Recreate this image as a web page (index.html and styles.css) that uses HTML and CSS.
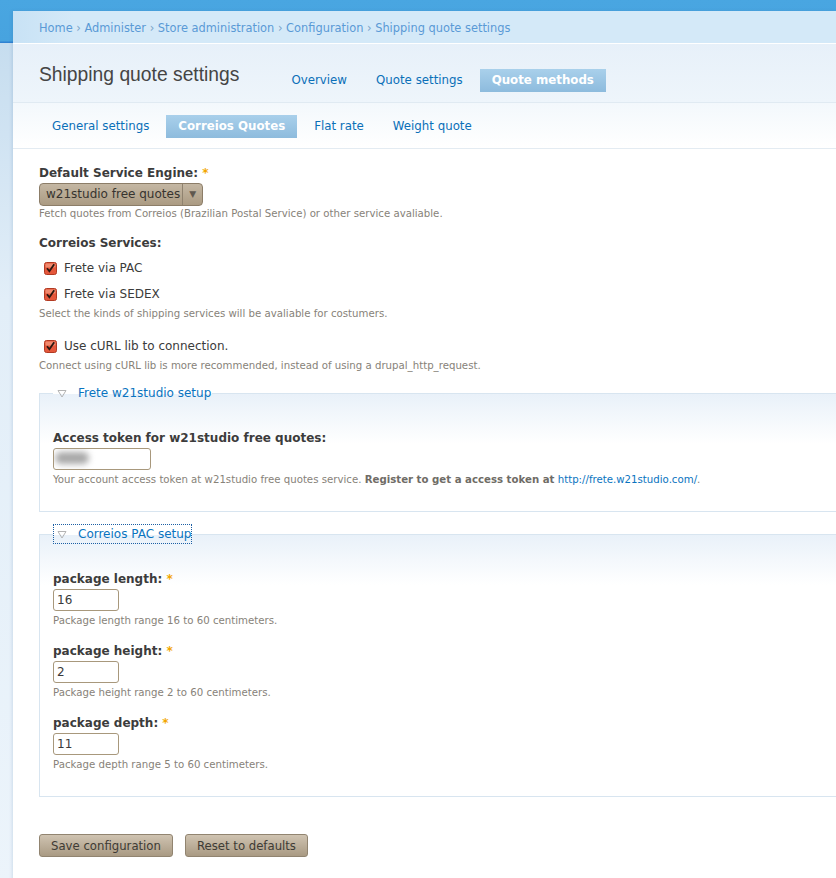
FILE: index.html
```html
<!DOCTYPE html>
<html lang="en">

<head>
    <meta charset="UTF-8">
    <title>Shipping quote settings</title>
    <link rel="stylesheet" href="styles.css">
</head>

<body>
    <div class="page">
        <!-- Breadcrumb -->
        <div class="breadcrumb">
            <a href="#">Home</a> <span class="sep">›</span>
            <a href="#">Administer</a> <span class="sep">›</span>
            <a href="#">Store administration</a> <span class="sep">›</span>
            <a href="#">Configuration</a> <span class="sep">›</span>
            <a href="#">Shipping quote settings</a>
        </div>

        <!-- Title + primary tabs -->
        <div class="header">
            <h1 class="title">Shipping quote settings</h1>
            <ul class="tabs">
                <li><a href="#">Overview</a></li>
                <li><a href="#">Quote settings</a></li>
                <li class="active"><a href="#">Quote methods</a></li>
            </ul>
        </div>

        <!-- Secondary tabs -->
        <div class="subtabs">
            <ul class="tabs">
                <li><a href="#">General settings</a></li>
                <li class="active"><a href="#">Correios Quotes</a></li>
                <li><a href="#">Flat rate</a></li>
                <li><a href="#">Weight quote</a></li>
            </ul>
        </div>

        <form class="content">
            <div class="form-item">
                <label class="label">Default Service Engine: <span class="req">*</span></label>
                <div class="select">
                    <span class="select-value">w21studio free quotes</span>
                    <span class="select-arrow">▼</span>
                </div>
                <div class="description">Fetch quotes from Correios (Brazilian Postal Service) or other service avaliable.</div>
            </div>

            <div class="form-item">
                <label class="label">Correios Services:</label>
                <div class="checkbox">
                    <svg class="check" width="13" height="13" viewBox="0 0 13 13"><rect x="0.5" y="0.5" width="12" height="12" rx="2" fill="#e4573b" stroke="#b23a22"/><rect x="1.5" y="1.5" width="10" height="4" rx="1" fill="#f08a6e"/><path d="M3 6.2 L5.4 9.2 L10.2 2.2" fill="none" stroke="#2b1710" stroke-width="1.8"/></svg>
                    <span>Frete via PAC</span>
                </div>
                <div class="checkbox">
                    <svg class="check" width="13" height="13" viewBox="0 0 13 13"><rect x="0.5" y="0.5" width="12" height="12" rx="2" fill="#e4573b" stroke="#b23a22"/><rect x="1.5" y="1.5" width="10" height="4" rx="1" fill="#f08a6e"/><path d="M3 6.2 L5.4 9.2 L10.2 2.2" fill="none" stroke="#2b1710" stroke-width="1.8"/></svg>
                    <span>Frete via SEDEX</span>
                </div>
                <div class="description">Select the kinds of shipping services will be avaliable for costumers.</div>
            </div>

            <div class="form-item tight">
                <div class="checkbox">
                    <svg class="check" width="13" height="13" viewBox="0 0 13 13"><rect x="0.5" y="0.5" width="12" height="12" rx="2" fill="#e4573b" stroke="#b23a22"/><rect x="1.5" y="1.5" width="10" height="4" rx="1" fill="#f08a6e"/><path d="M3 6.2 L5.4 9.2 L10.2 2.2" fill="none" stroke="#2b1710" stroke-width="1.8"/></svg>
                    <span>Use cURL lib to connection.</span>
                </div>
                <div class="description">Connect using cURL lib is more recommended, instead of using a drupal_http_request.</div>
            </div>

            <fieldset class="group">
                <legend><span class="legend-inner"><svg class="arrow" width="10" height="9" viewBox="0 0 10 9"><polygon points="1,1.5 9,1.5 5,8" fill="none" stroke="#b4b4b4"/></svg><a href="#">Frete w21studio setup</a></span></legend>
                <div class="form-item">
                    <label class="label">Access token for w21studio free quotes:</label>
                    <div class="input wide"><span class="blur"></span></div>
                    <div class="description">Your account access token at w21studio free quotes service. <strong>Register to get a access token at</strong> <a href="#">http://frete.w21studio.com/</a>.</div>
                </div>
            </fieldset>

            <fieldset class="group">
                <legend><span class="legend-inner focused"><svg class="arrow" width="10" height="9" viewBox="0 0 10 9"><polygon points="1,1.5 9,1.5 5,8" fill="none" stroke="#b4b4b4"/></svg><a href="#">Correios PAC setup</a></span></legend>
                <div class="form-item">
                    <label class="label">package length: <span class="req">*</span></label>
                    <input class="input" type="text" value="16">
                    <div class="description">Package length range 16 to 60 centimeters.</div>
                </div>
                <div class="form-item">
                    <label class="label">package height: <span class="req">*</span></label>
                    <input class="input" type="text" value="2">
                    <div class="description">Package height range 2 to 60 centimeters.</div>
                </div>
                <div class="form-item">
                    <label class="label">package depth: <span class="req">*</span></label>
                    <input class="input" type="text" value="11">
                    <div class="description">Package depth range 5 to 60 centimeters.</div>
                </div>
            </fieldset>

            <div class="actions">
                <button type="button" class="btn">Save configuration</button>
                <button type="button" class="btn">Reset to defaults</button>
            </div>
        </form>
    </div>
</body>

</html>
```

FILE: styles.css
```css
body {
    margin: 0;
    font-family: "DejaVu Sans", Verdana, sans-serif;
    font-size: 12px;
    color: #3b3b3b;
    min-height: 100vh;
    background:
        linear-gradient(#49a6e1 0, #47a3df 41px, #2f82d2 42px, #2f82d2 43px, transparent 43px),
        linear-gradient(#c6ddef 43px, #e2eef8 300px, #ecf4fb);
}

a {
    color: #0a74c0;
    text-decoration: none;
}

.page {
    margin: 11px 0 0 13px;
    background: #fff;
    min-height: 867px;
    box-shadow: -1px 0 3px rgba(40, 90, 140, 0.15);
}

.breadcrumb {
    height: 30px;
    line-height: 30px;
    padding: 2px 0 0 26px;
    font-size: 11.4px;
    background: linear-gradient(to right, #c8e2f5, #d4e9f8 60px);
    border-bottom: 1px solid #fff;
}

.breadcrumb a {
    color: #5a9ad6;
}

.breadcrumb .sep {
    color: #7aa4c8;
}

.header {
    display: flex;
    align-items: flex-end;
    height: 59px;
    box-sizing: border-box;
    padding: 0 0 10px 26px;
    background: linear-gradient(#e7f0f9, #eef5fb);
    border-bottom: 1px solid #e0eaf2;
}

.title {
    margin: 0 40px 6px 0;
    font-family: "Liberation Sans", Arial, sans-serif;
    font-size: 19.3px;
    font-weight: normal;
    line-height: 23px;
    color: #454545;
}

.tabs {
    display: flex;
    margin: 0;
    padding: 0;
    list-style: none;
}

.tabs li {
    margin-right: 5px;
}

.tabs a {
    display: block;
    padding: 4px 12px;
    line-height: 15px;
    font-size: 11.8px;
    color: #0a6fb8;
}

.tabs .active a {
    background: linear-gradient(#a9d0eb, #8dbbdd);
    color: #fff;
    font-weight: bold;
}

.subtabs {
    padding: 12px 0 10px 27px;
    background: linear-gradient(#f3f8fc, #fff);
    border-bottom: 1px solid #e3ebf2;
}

.content {
    padding: 17px 0 30px 26px;
}

.form-item {
    margin-bottom: 16px;
}

.form-item.tight {
    margin-bottom: 11px;
}

.label {
    display: block;
    font-weight: bold;
    line-height: 15px;
    margin-bottom: 2px;
    color: #3c3c3c;
}

.req {
    color: #f2a600;
}

.select {
    display: flex;
    align-items: center;
    width: max-content;
    height: 23px;
    box-sizing: border-box;
    border: 1px solid #8c7d68;
    border-radius: 4px;
    background: linear-gradient(#c4b7a3, #ab9b83);
}

.select-value {
    padding: 0 2px 0 6px;
    line-height: 21px;
    color: #37342f;
}

.select-arrow {
    border-left: 1px solid #8f826f;
    padding: 0 6px;
    line-height: 21px;
    font-size: 9px;
    color: #5f584e;
}

.description {
    margin-top: 3px;
    font-size: 10.2px;
    line-height: 13px;
    color: #878279;
}

.select + .description {
    margin-top: 1px;
}

.description strong {
    color: #6f6c66;
}

.checkbox {
    display: flex;
    align-items: center;
    height: 20px;
    margin: 6px 0 0 5px;
}

.label + .checkbox {
    margin-top: 7px;
}

.check {
    margin-right: 7px;
}

.group {
    margin: 0 0 12px 0;
    padding: 28px 13px 25px 13px;
    border: 1px solid #d8e5f0;
    border-right: 0;
    background: linear-gradient(#e9f1f9, #fff 50px);
}

.group legend {
    padding: 0;
}

.legend-inner {
    display: inline-flex;
    align-items: center;
    height: 18px;
    border: 1px solid transparent;
}

.legend-inner.focused {
    border: 1px dotted #1c5fa4;
}

.arrow {
    margin: 0 11px 0 3px;
}

.input {
    display: block;
    width: 66px;
    height: 22px;
    box-sizing: border-box;
    padding: 0 3px;
    border: 1px solid #a8987c;
    border-radius: 3px;
    font-family: "DejaVu Sans", Verdana, sans-serif;
    font-size: 12px;
    color: #3a3a3a;
    background: #fff;
}

.input.wide {
    width: 98px;
    position: relative;
    overflow: hidden;
}

.blur {
    position: absolute;
    left: 1px;
    top: 3px;
    width: 34px;
    height: 12px;
    border-radius: 6px;
    background: #a8a8a8;
    filter: blur(3px);
}

.group .form-item {
    margin-bottom: 17px;
}

.group .form-item:last-child {
    margin-bottom: 0;
}

.actions {
    padding-top: 25px;
    display: flex;
    gap: 12px;
}

.btn {
    height: 23px;
    padding: 0 11px;
    border: 1px solid #918470;
    border-radius: 3px;
    background: linear-gradient(#cfc3b1, #a99a83);
    font-family: "DejaVu Sans", Verdana, sans-serif;
    font-size: 11.7px;
    color: #3e3b35;
}
```
